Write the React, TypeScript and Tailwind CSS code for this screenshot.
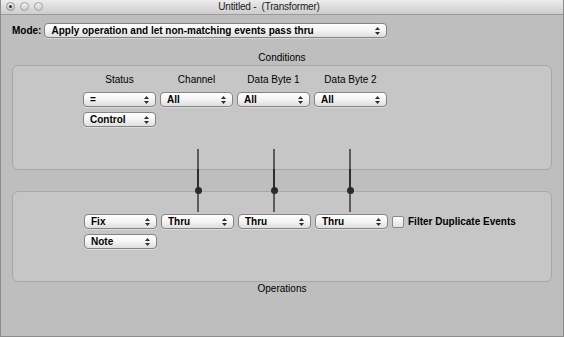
import React from "react";

// small popup button (Aqua style)
function Popup({ label, width = 73 }: { label: string; width?: number }) {
    return (
        <div
            style={{ width }}
            className="relative h-[15px] shrink-0 rounded-[4px] border border-[#848484] bg-gradient-to-b from-[#ffffff] via-[#f4f4f4] to-[#dedede] shadow-[0_1px_0_rgba(255,255,255,0.35)] flex items-center"
        >
            <span className="pl-[6px] text-[10px] font-bold leading-none text-black">{label}</span>
            <svg className="absolute right-[6px] top-[3px]" width="5" height="8" viewBox="0 0 5 8">
                <path d="M2.5 0 L5 3 L0 3 Z" fill="#2e2e2e" />
                <path d="M0 5 L5 5 L2.5 8 Z" fill="#2e2e2e" />
            </svg>
        </div>
    );
}

function Slider({ left }: { left: number }) {
    return (
        <div className="absolute top-[149px] w-[7px] h-[63px]" style={{ left: left - 3 }}>
            <div className="absolute left-[2px] top-0 w-[2px] h-[20px] bg-[#5c5c5c]" />
            <div className="absolute left-[2px] top-[20px] w-[2px] h-[21px] bg-[#2e2e2e]" />
            <div className="absolute left-[2px] top-[42px] w-[2px] h-[21px] bg-[#5c5c5c]" />
            <div className="absolute left-0 top-[38px] w-[7px] h-[7px] rounded-full bg-[#2a2a2a]" />
        </div>
    );
}

export default function App() {
    const headings = ["Status", "Channel", "Data Byte 1", "Data Byte 2"];

    return (
        <div className="relative w-[564px] h-[337px] overflow-hidden bg-[#bebebe] border-x border-b border-[#8c8c8c] flex flex-col font-['Liberation_Sans',Arial,sans-serif] text-black">
            {/* barra de título */}
            <div className="relative h-[15px] shrink-0 bg-gradient-to-b from-[#ececec] to-[#cdcdcd] border-b border-[#9a9a9a] flex items-center justify-center">
                <div className="absolute left-[5px] top-[2px] flex gap-[5px]">
                    <div className="w-[9px] h-[9px] rounded-full border border-[#8f8f8f] bg-gradient-to-b from-[#f2f2f2] to-[#c4c4c4] flex items-center justify-center">
                        <div className="w-[3px] h-[3px] rounded-full bg-[#333]" />
                    </div>
                    <div className="w-[9px] h-[9px] rounded-full border border-[#a0a0a0] bg-gradient-to-b from-[#f2f2f2] to-[#cdcdcd]" />
                    <div className="w-[9px] h-[9px] rounded-full border border-[#a0a0a0] bg-gradient-to-b from-[#f2f2f2] to-[#cdcdcd]" />
                </div>
                <span className="pr-[26px] text-[10px] leading-none text-[#1a1a1a] whitespace-pre tracking-[-0.2px]">
                    Untitled -  (Transformer)
                </span>
            </div>

            {/* Mode */}
            <div className="mt-[8px] pl-[11px] flex items-center gap-[3px]">
                <span className="text-[10px] font-bold leading-none">Mode:</span>
                <Popup label="Apply operation and let non-matching events pass thru" width={343} />
            </div>

            <div className="mt-[14px] text-center text-[10px] leading-[12px]">Conditions</div>

            {/* Conditions */}
            <div className="mt-[1px] mx-[11px] h-[105px] rounded-[6px] border border-[#a8a8a8] bg-[#c6c6c6] pl-[70px] pt-[8px]">
                <div className="flex gap-[4px]">
                    {headings.map(h => (
                        <div key={h} className="w-[73px] text-center text-[10px] leading-[12px]">
                            {h}
                        </div>
                    ))}
                </div>
                <div className="mt-[6px] flex gap-[4px]">
                    <Popup label="=" />
                    <Popup label="All" />
                    <Popup label="All" />
                    <Popup label="All" />
                </div>
                <div className="mt-[5px] flex">
                    <Popup label="Control" />
                </div>
            </div>

            {/* Operations */}
            <div className="mt-[21px] mx-[11px] h-[91px] rounded-[6px] border border-[#a8a8a8] bg-[#c6c6c6] pl-[71px] pt-[22px]">
                <div className="flex items-center gap-[4px]">
                    <Popup label="Fix" />
                    <Popup label="Thru" />
                    <Popup label="Thru" />
                    <Popup label="Thru" />
                    <div className="w-[12px] h-[12px] rounded-[2px] border border-[#8a8a8a] bg-gradient-to-b from-white to-[#e2e2e2]" />
                    <span className="text-[10px] font-bold leading-none">Filter Duplicate Events</span>
                </div>
                <div className="mt-[5px] flex">
                    <Popup label="Note" />
                </div>
            </div>

            <div className="mt-[1px] text-center text-[10px] leading-[12px]">Operations</div>

            <Slider left={197} />
            <Slider left={273} />
            <Slider left={349} />
        </div>
    );
}
